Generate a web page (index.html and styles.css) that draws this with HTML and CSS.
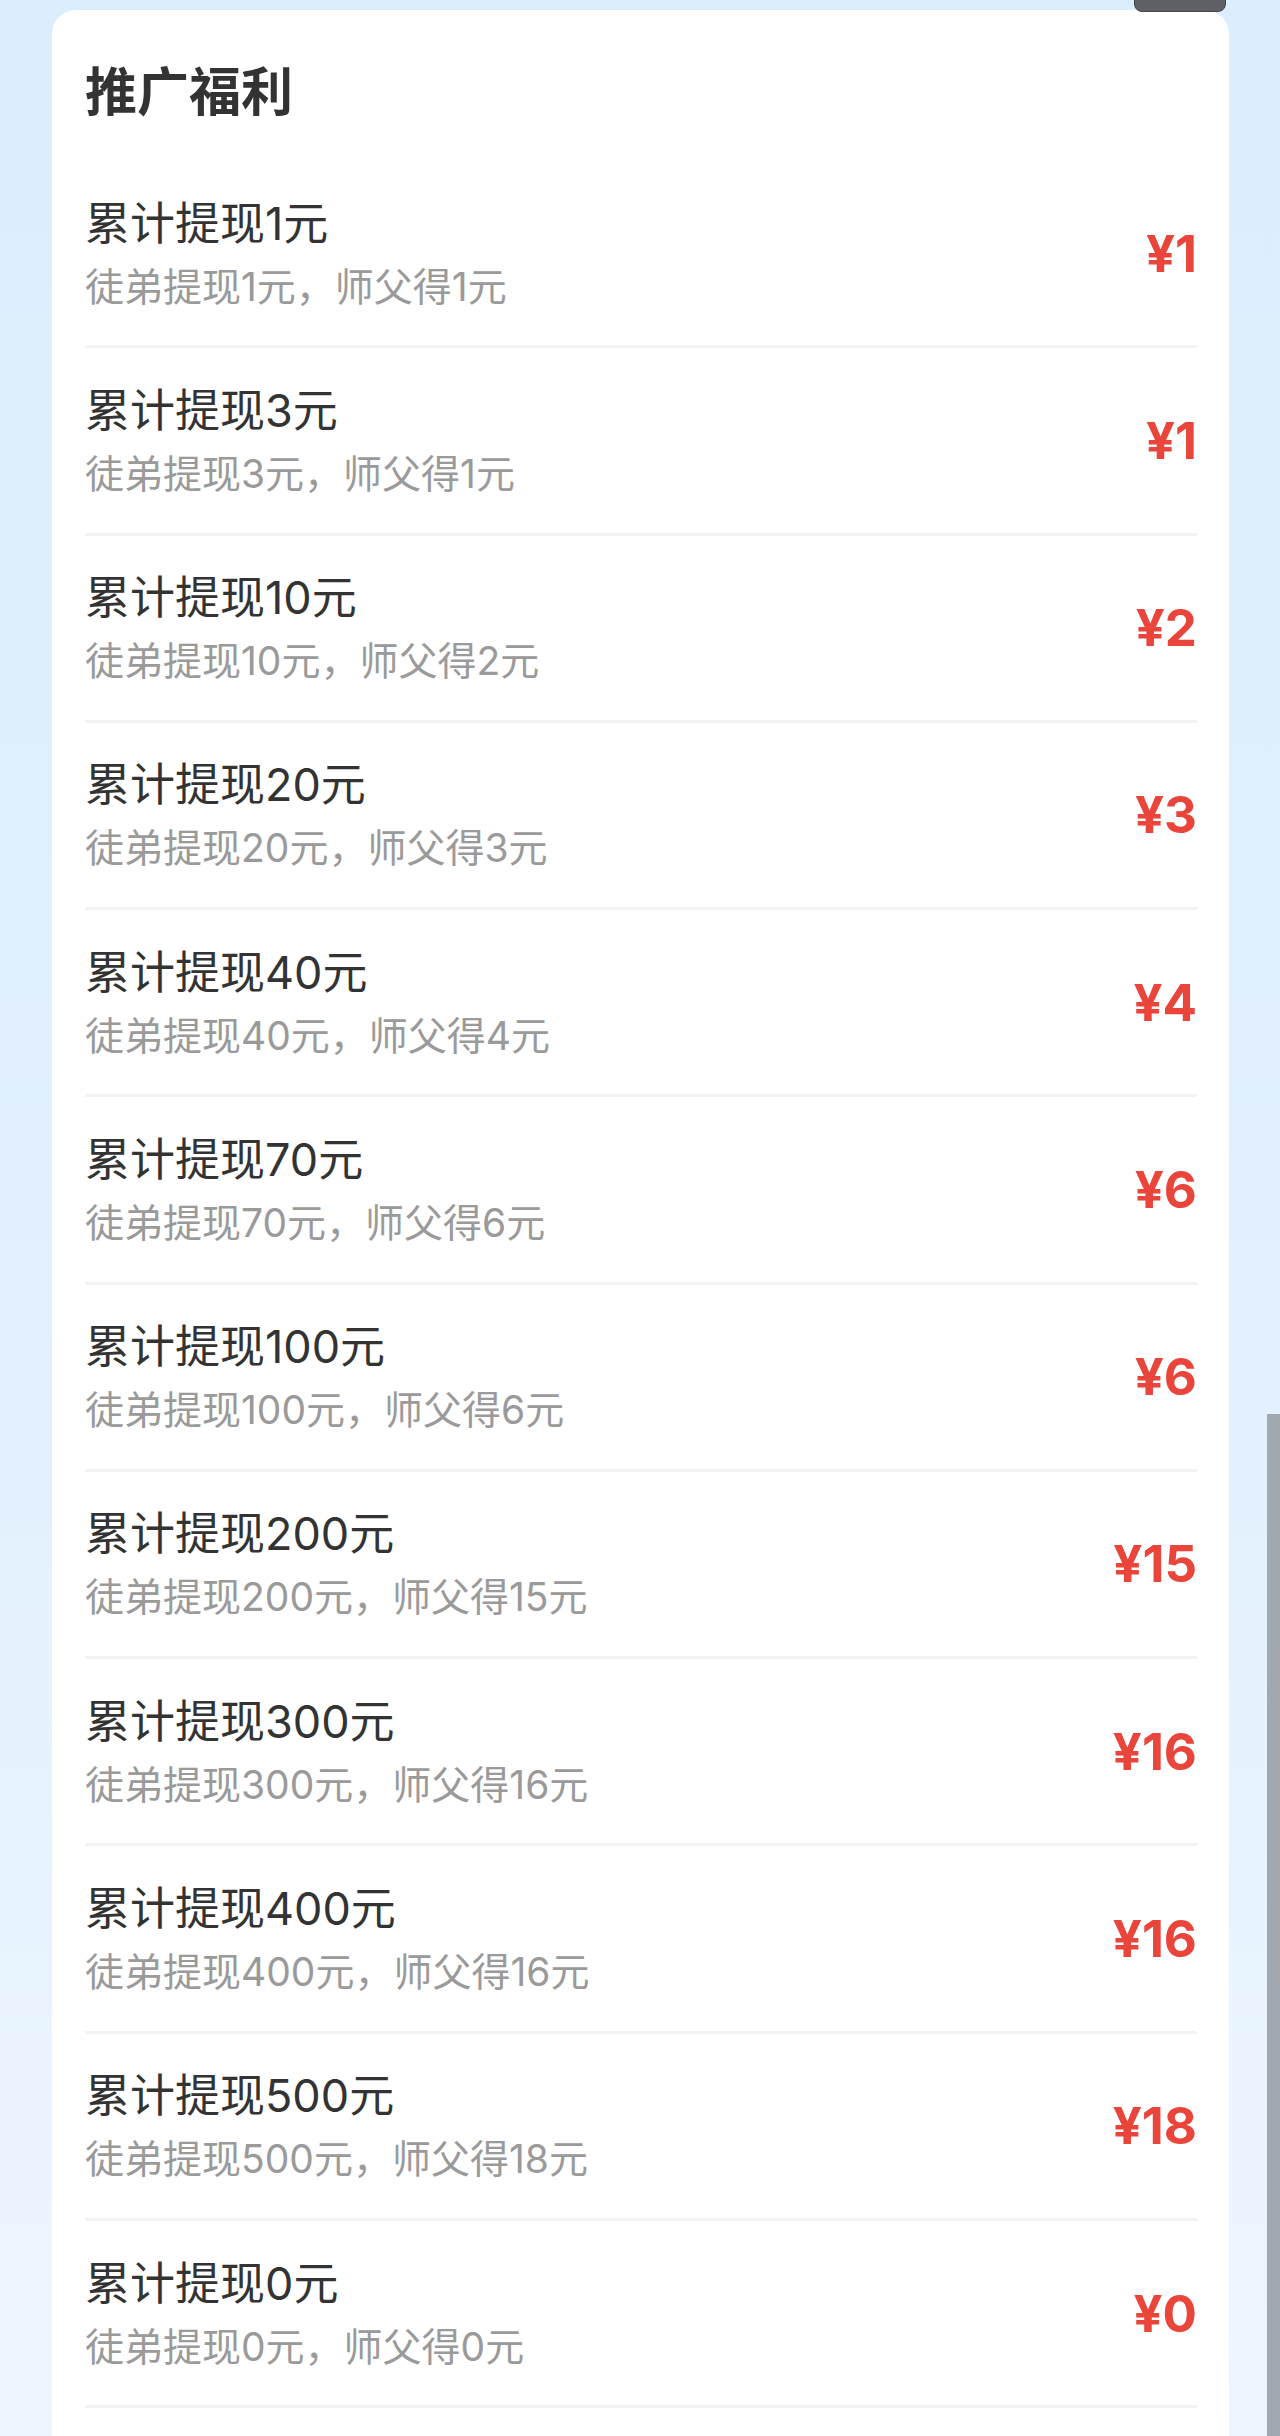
FILE: index.html
```html
<!DOCTYPE html>
<html lang="zh-CN">
<head>
  <meta charset="UTF-8">
  <title>推广福利</title>
  <link rel="stylesheet" href="styles.css">
</head>
<body>

  <div class="top-tab"></div>

  <div class="card">
    <div class="card-header">
      <h2>推广福利</h2>
    </div>

    <div class="reward-row">
      <div class="reward-text">
        <div class="reward-title">累计提现1元</div>
        <div class="reward-desc">徒弟提现1元，师父得1元</div>
      </div>
      <div class="reward-amount">¥1</div>
    </div>

    <div class="reward-row">
      <div class="reward-text">
        <div class="reward-title">累计提现3元</div>
        <div class="reward-desc">徒弟提现3元，师父得1元</div>
      </div>
      <div class="reward-amount">¥1</div>
    </div>

    <div class="reward-row">
      <div class="reward-text">
        <div class="reward-title">累计提现10元</div>
        <div class="reward-desc">徒弟提现10元，师父得2元</div>
      </div>
      <div class="reward-amount">¥2</div>
    </div>

    <div class="reward-row">
      <div class="reward-text">
        <div class="reward-title">累计提现20元</div>
        <div class="reward-desc">徒弟提现20元，师父得3元</div>
      </div>
      <div class="reward-amount">¥3</div>
    </div>

    <div class="reward-row">
      <div class="reward-text">
        <div class="reward-title">累计提现40元</div>
        <div class="reward-desc">徒弟提现40元，师父得4元</div>
      </div>
      <div class="reward-amount">¥4</div>
    </div>

    <div class="reward-row">
      <div class="reward-text">
        <div class="reward-title">累计提现70元</div>
        <div class="reward-desc">徒弟提现70元，师父得6元</div>
      </div>
      <div class="reward-amount">¥6</div>
    </div>

    <div class="reward-row">
      <div class="reward-text">
        <div class="reward-title">累计提现100元</div>
        <div class="reward-desc">徒弟提现100元，师父得6元</div>
      </div>
      <div class="reward-amount">¥6</div>
    </div>

    <div class="reward-row">
      <div class="reward-text">
        <div class="reward-title">累计提现200元</div>
        <div class="reward-desc">徒弟提现200元，师父得15元</div>
      </div>
      <div class="reward-amount">¥15</div>
    </div>

    <div class="reward-row">
      <div class="reward-text">
        <div class="reward-title">累计提现300元</div>
        <div class="reward-desc">徒弟提现300元，师父得16元</div>
      </div>
      <div class="reward-amount">¥16</div>
    </div>

    <div class="reward-row">
      <div class="reward-text">
        <div class="reward-title">累计提现400元</div>
        <div class="reward-desc">徒弟提现400元，师父得16元</div>
      </div>
      <div class="reward-amount">¥16</div>
    </div>

    <div class="reward-row">
      <div class="reward-text">
        <div class="reward-title">累计提现500元</div>
        <div class="reward-desc">徒弟提现500元，师父得18元</div>
      </div>
      <div class="reward-amount">¥18</div>
    </div>

    <div class="reward-row">
      <div class="reward-text">
        <div class="reward-title">累计提现0元</div>
        <div class="reward-desc">徒弟提现0元，师父得0元</div>
      </div>
      <div class="reward-amount">¥0</div>
    </div>
  </div>

  <div class="scroll-thumb"></div>

</body>
</html>
```

FILE: styles.css
```css
html, body {
  height: 100%;
}
body {
  margin: 0;
  overflow: hidden;
  font-family: Inter, "Noto Sans CJK SC", sans-serif;
  background: linear-gradient(180deg, #dcedfd 0%, #e3f1fe 60%, #edf6ff 100%);
}
.top-tab {
  position: absolute;
  top: -10px;
  left: 1134px;
  width: 90px;
  height: 20px;
  background: #5f6166;
  border: 1.5px solid #45474b;
  border-radius: 8px;
  z-index: 2;
}
.card {
  margin: 10px 0 0 52px;
  width: 1177px;
  box-sizing: border-box;
  padding: 0 32px 40px 33px;
  background: #fff;
  border-radius: 24px 24px 0 0;
}
.card-header {
  height: 151px;
  box-sizing: border-box;
  padding-top: 15px;
}
.card-header h2 {
  margin: 0;
  font-size: 52px;
  line-height: 136px;
  font-weight: 700;
  color: #333;
}
.reward-row {
  height: 187.27px;
  box-sizing: border-box;
  border-bottom: 3px solid #f3f3f3;
  display: flex;
  align-items: center;
  justify-content: space-between;
}
.reward-title {
  font-size: 45px;
  line-height: 60px;
  color: #333;
}
.reward-desc {
  margin-top: 7px;
  font-size: 39px;
  line-height: 52px;
  color: #9a9a9a;
}
.reward-amount {
  font-size: 51px;
  font-weight: 700;
  color: #e9453a;
}
.scroll-thumb {
  position: fixed;
  right: 0;
  top: 1414px;
  bottom: 0;
  width: 13px;
  background: #a1a8af;
}
```
